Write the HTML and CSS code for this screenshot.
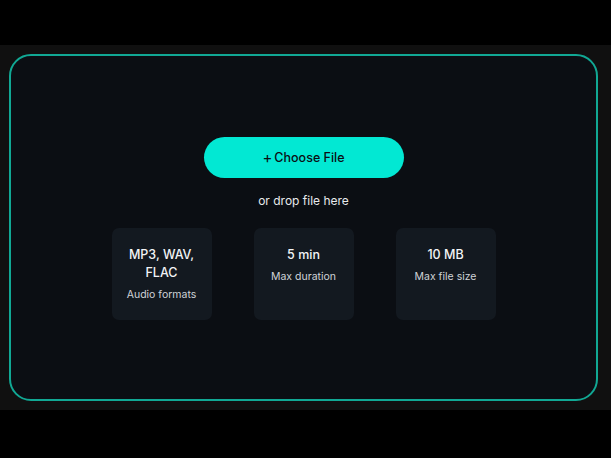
FILE: index.html
```html
<!DOCTYPE html>
<html lang="en">
<head>
<meta charset="utf-8">
<title>Upload</title>
<link rel="stylesheet" href="styles.css">
</head>
<body>
<div class="band">
  <div class="dropzone">
    <button class="choose" type="button"><span class="plus">+</span>Choose File</button>
    <div class="hint">or drop file here</div>
    <div class="tiles">
      <div class="tile">
        <div class="tile-title">MP3, WAV,<br>FLAC</div>
        <div class="tile-sub">Audio formats</div>
      </div>
      <div class="tile">
        <div class="tile-title">5 min</div>
        <div class="tile-sub">Max duration</div>
      </div>
      <div class="tile">
        <div class="tile-title">10 MB</div>
        <div class="tile-sub">Max file size</div>
      </div>
    </div>
  </div>
</div>
</body>
</html>
```

FILE: styles.css
```css
html, body {
  margin: 0;
  padding: 0;
  background: #000;
  height: 100%;
}
body {
  font-family: Inter, "Noto Sans", "Liberation Sans", sans-serif;
  -webkit-font-smoothing: antialiased;
}
.band {
  margin-top: 45px;
  background: #101010;
  padding: 9px 13px 9px 9px;
}
.dropzone {
  box-sizing: border-box;
  height: 347px;
  padding-top: 2px;
  border: 2px solid #11a894;
  border-radius: 22px;
  background: #0b0e13;
  display: flex;
  flex-direction: column;
  align-items: center;
  justify-content: center;
}
.choose {
  width: 200px;
  height: 41px;
  border: none;
  border-radius: 21px;
  background: #02e8d3;
  color: #0b0f14;
  font-family: inherit;
  font-size: 12.5px;
  font-weight: 500;
  display: flex;
  align-items: center;
  justify-content: center;
  padding: 0;
  cursor: pointer;
}
.plus {
  font-size: 15px;
  font-weight: 400;
  margin-right: 2px;
  line-height: 1;
}
.hint {
  margin-top: 14px;
  font-size: 12px;
  line-height: 18px;
  color: #e8eaec;
}
.tiles {
  margin-top: 18px;
  display: flex;
  gap: 42px;
}
.tile {
  box-sizing: border-box;
  width: 100px;
  padding: 18px 8px;
  background: #131920;
  border-radius: 7px;
  text-align: center;
}
.tile-title {
  font-size: 12.5px;
  font-weight: 500;
  line-height: 18px;
  color: #f2f4f6;
}
.tile-sub {
  margin-top: 6px;
  font-size: 10.5px;
  line-height: 14px;
  color: #cfd3d8;
}
```
